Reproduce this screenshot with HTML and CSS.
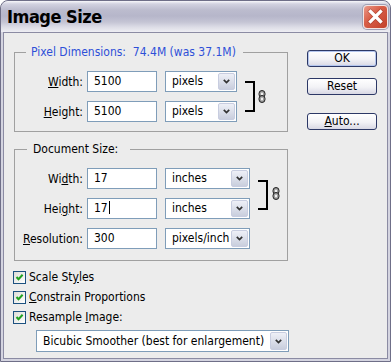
FILE: index.html
```html
<!DOCTYPE html>
<html>
<head>
<meta charset="utf-8">
<title>Image Size</title>
<link rel="stylesheet" href="styles.css">
</head>
<body>
<div class="window">
  <div class="titlebar">
    <span class="title">Image Size</span>
    <span class="close">
      <svg width="23" height="22" viewBox="0 0 23 22"><path d="M6.5 5.5 L16.5 15.5 M16.5 5.5 L6.5 15.5" stroke="#7a1f12" stroke-width="4.6" stroke-linecap="square" opacity="0.35"/><path d="M6.5 5.5 L16.5 15.5 M16.5 5.5 L6.5 15.5" stroke="#fff" stroke-width="3.2" stroke-linecap="square"/></svg>
    </span>
  </div>
  <div class="client">
    <div class="main">
      <fieldset class="group group-pixel">
        <legend class="legend-pixel">Pixel Dimensions:&nbsp; 74.4M (was 37.1M)</legend>
        <div class="linked">
          <div class="rows">
            <div class="row">
              <span class="lbl"><u>W</u>idth:</span>
              <div class="input">5100</div>
              <div class="select sel-px"><span class="sel-text">pixels</span><span class="sel-btn"><svg width="7" height="5" viewBox="0 0 7 5"><path d="M0.8 0.8 L3.5 3.6 L6.2 0.8" fill="none" stroke="#333" stroke-width="1.7"/></svg></span></div>
            </div>
            <div class="row">
              <span class="lbl"><u>H</u>eight:</span>
              <div class="input">5100</div>
              <div class="select sel-px"><span class="sel-text">pixels</span><span class="sel-btn"><svg width="7" height="5" viewBox="0 0 7 5"><path d="M0.8 0.8 L3.5 3.6 L6.2 0.8" fill="none" stroke="#333" stroke-width="1.7"/></svg></span></div>
            </div>
          </div>
          <div class="bracket"></div>
          <svg class="chain chain-px" width="8" height="13" viewBox="0 0 8 13"><rect x="1" y="0.5" width="6" height="7" rx="3" fill="#9a9a9a" stroke="#222" stroke-width="1"/><rect x="3" y="2.5" width="2" height="3" rx="1" fill="#f4f4f4"/><rect x="1" y="5.5" width="6" height="7" rx="3" fill="#9a9a9a" stroke="#222" stroke-width="1"/><rect x="3" y="7.5" width="2" height="3" rx="1" fill="#f4f4f4"/></svg>
        </div>
      </fieldset>

      <fieldset class="group group-doc">
        <legend class="legend-doc">Document Size:</legend>
        <div class="linked">
          <div class="rows">
            <div class="row">
              <span class="lbl">Wi<u>d</u>th:</span>
              <div class="input">17</div>
              <div class="select sel-doc"><span class="sel-text">inches</span><span class="sel-btn"><svg width="7" height="5" viewBox="0 0 7 5"><path d="M0.8 0.8 L3.5 3.6 L6.2 0.8" fill="none" stroke="#333" stroke-width="1.7"/></svg></span></div>
            </div>
            <div class="row">
              <span class="lbl">Hei<u>g</u>ht:</span>
              <div class="input">17<span class="caret"></span></div>
              <div class="select sel-doc"><span class="sel-text">inches</span><span class="sel-btn"><svg width="7" height="5" viewBox="0 0 7 5"><path d="M0.8 0.8 L3.5 3.6 L6.2 0.8" fill="none" stroke="#333" stroke-width="1.7"/></svg></span></div>
            </div>
          </div>
          <div class="bracket bracket-doc"></div>
          <svg class="chain chain-doc" width="8" height="13" viewBox="0 0 8 13"><rect x="1" y="0.5" width="6" height="7" rx="3" fill="#9a9a9a" stroke="#222" stroke-width="1"/><rect x="3" y="2.5" width="2" height="3" rx="1" fill="#f4f4f4"/><rect x="1" y="5.5" width="6" height="7" rx="3" fill="#9a9a9a" stroke="#222" stroke-width="1"/><rect x="3" y="7.5" width="2" height="3" rx="1" fill="#f4f4f4"/></svg>
        </div>
        <div class="row row-res">
          <span class="lbl"><u>R</u>esolution:</span>
          <div class="input">300</div>
          <div class="select sel-doc"><span class="sel-text">pixels/inch</span><span class="sel-btn"><svg width="7" height="5" viewBox="0 0 7 5"><path d="M0.8 0.8 L3.5 3.6 L6.2 0.8" fill="none" stroke="#333" stroke-width="1.7"/></svg></span></div>
        </div>
      </fieldset>

      <div class="checks">
        <div class="check-row"><span class="checkbox"><svg width="11" height="11" viewBox="0 0 11 11"><path d="M2.5 5 L4.5 7.2 L8.6 2.8" fill="none" stroke="#21a121" stroke-width="2"/></svg></span><span>Scale St<u>y</u>les</span></div>
        <div class="check-row"><span class="checkbox"><svg width="11" height="11" viewBox="0 0 11 11"><path d="M2.5 5 L4.5 7.2 L8.6 2.8" fill="none" stroke="#21a121" stroke-width="2"/></svg></span><span><u>C</u>onstrain Proportions</span></div>
        <div class="check-row"><span class="checkbox"><svg width="11" height="11" viewBox="0 0 11 11"><path d="M2.5 5 L4.5 7.2 L8.6 2.8" fill="none" stroke="#21a121" stroke-width="2"/></svg></span><span>Resample <u>I</u>mage:</span></div>
      </div>

      <div class="select sel-wide"><span class="sel-text">Bicubic Smoother (best for enlargement)</span><span class="sel-btn"><svg width="7" height="5" viewBox="0 0 7 5"><path d="M0.8 0.8 L3.5 3.6 L6.2 0.8" fill="none" stroke="#333" stroke-width="1.7"/></svg></span></div>
    </div>

    <div class="buttons">
      <div class="btn btn-default">OK</div>
      <div class="btn btn-reset">Reset</div>
      <div class="btn btn-auto"><u>A</u>uto...</div>
    </div>
  </div>
</div>
</body>
</html>
```
FILE: styles.css
```css
body {
  margin: 0;
  background: #ffffff;
  font-family: "DejaVu Sans Condensed", "DejaVu Sans", sans-serif;
  font-size: 12px;
  line-height: 14px;
  color: #000;
}

.window {
  width: 391px;
  height: 362px;
  box-sizing: border-box;
  border: 1px solid #6f6f88;
  border-radius: 8px 8px 0 0;
  background: #d4d4e0;
  display: flex;
  flex-direction: column;
  overflow: hidden;
}

.titlebar {
  flex: none;
  height: 31px;
  display: flex;
  align-items: center;
  justify-content: space-between;
  padding-left: 6px;
  padding-right: 2px;
  border-radius: 7px 7px 0 0;
  background: linear-gradient(to bottom,
    #f8f8fb 0px, #d2d2e0 3px, #bcbcce 9px, #b6b6ca 15px,
    #c4c4d4 21px, #dcdce6 26px, #eeeef3 31px);
}

.title {
  font-weight: bold;
  font-size: 18px;
  letter-spacing: -0.5px;
  color: #000;
}

.close {
  width: 25px;
  height: 24px;
  box-sizing: border-box;
  border: 1px solid #f4e6e4;
  border-radius: 4px;
  background: linear-gradient(135deg, #eb9a8a 0%, #d9604a 40%, #c2412b 100%);
  box-shadow: 0 0 0 1px #a0a0b4;
  display: flex;
  align-items: center;
  justify-content: center;
}

.client {
  flex: 1;
  margin: 0 2px 2px;
  border: 1px solid #8b8ba3;
  background: #ececec;
  display: flex;
}

.main {
  width: 274px;
  margin-left: 10px;
  padding-top: 12px;
}

.group {
  margin: 0;
  min-width: 0;
  border: 1px solid #a0a0a0;
}

.group-pixel {
  padding: 12px 0 9px;
}

.group-doc {
  margin-top: 10px;
  padding: 12px 0 11px;
}

legend {
  line-height: 14px;
}

.legend-pixel {
  color: #2e50d8;
  margin-left: 11px;
  padding: 0 7px 0 5px;
}

.legend-doc {
  margin-left: 12px;
  padding: 0 12px 0 6px;
}

.linked {
  display: flex;
  align-items: center;
}

.rows {
  display: flex;
  flex-direction: column;
  gap: 9px;
}

.row {
  display: flex;
  align-items: center;
  height: 21px;
}

.row-res {
  margin-top: 9px;
}

.lbl {
  width: 68px;
  margin-right: 4px;
  text-align: right;
  white-space: nowrap;
}

.input {
  width: 70px;
  height: 21px;
  box-sizing: border-box;
  border: 1px solid #7f9db9;
  background: #fff;
  padding-left: 6px;
  line-height: 19px;
}

.caret {
  display: inline-block;
  width: 1px;
  height: 13px;
  margin-left: 1px;
  background: #000;
  vertical-align: -2px;
}

.select {
  margin-left: 8px;
  height: 21px;
  box-sizing: border-box;
  border: 1px solid #7f9db9;
  background: #fff;
  display: flex;
}

.sel-px { width: 72px; }
.sel-doc { width: 85px; }

.sel-wide {
  width: 253px;
  height: 22px;
  margin: 3px 0 0 22px;
}

.sel-text {
  flex: 1;
  padding-left: 6px;
  line-height: 19px;
  white-space: nowrap;
  overflow: hidden;
}

.sel-wide .sel-text {
  line-height: 20px;
}

.sel-btn {
  flex: none;
  width: 17px;
  margin: 1px;
  box-sizing: border-box;
  border: 1px solid #c8cde0;
  border-radius: 2px;
  background: linear-gradient(to bottom, #eef0f7, #c9cedd);
  display: flex;
  align-items: center;
  justify-content: center;
}

.bracket {
  width: 10px;
  height: 31px;
  box-sizing: border-box;
  border: 2px solid #000;
  border-left: 0;
  margin-left: 8px;
}

.bracket-doc {
  height: 30px;
  margin-top: 2px;
}

.chain-px { margin-left: 3px; }
.chain-doc { margin-left: 4px; }

.checks {
  margin-top: 6px;
  margin-left: -1px;
}

.check-row {
  height: 20px;
  display: flex;
  align-items: center;
  gap: 3px;
}

.checkbox {
  width: 13px;
  height: 13px;
  box-sizing: border-box;
  border: 1px solid #1c5180;
  background: linear-gradient(135deg, #dcdcd7, #ffffff);
  display: flex;
  align-items: center;
  justify-content: center;
}

.buttons {
  margin-left: 19px;
  padding-top: 17px;
  display: flex;
  flex-direction: column;
}

.btn {
  width: 70px;
  height: 17px;
  box-sizing: border-box;
  border: 1px solid #2c3866;
  border-radius: 3px;
  background: linear-gradient(to bottom, #ffffff 0%, #f2f2f6 55%, #d8d8e4 100%);
  text-align: center;
  line-height: 15px;
}

.btn-default {
  box-shadow: inset 0 0 0 1px #b4c6ee;
}

.btn-reset { margin-top: 11px; }
.btn-auto { margin-top: 18px; }
```
